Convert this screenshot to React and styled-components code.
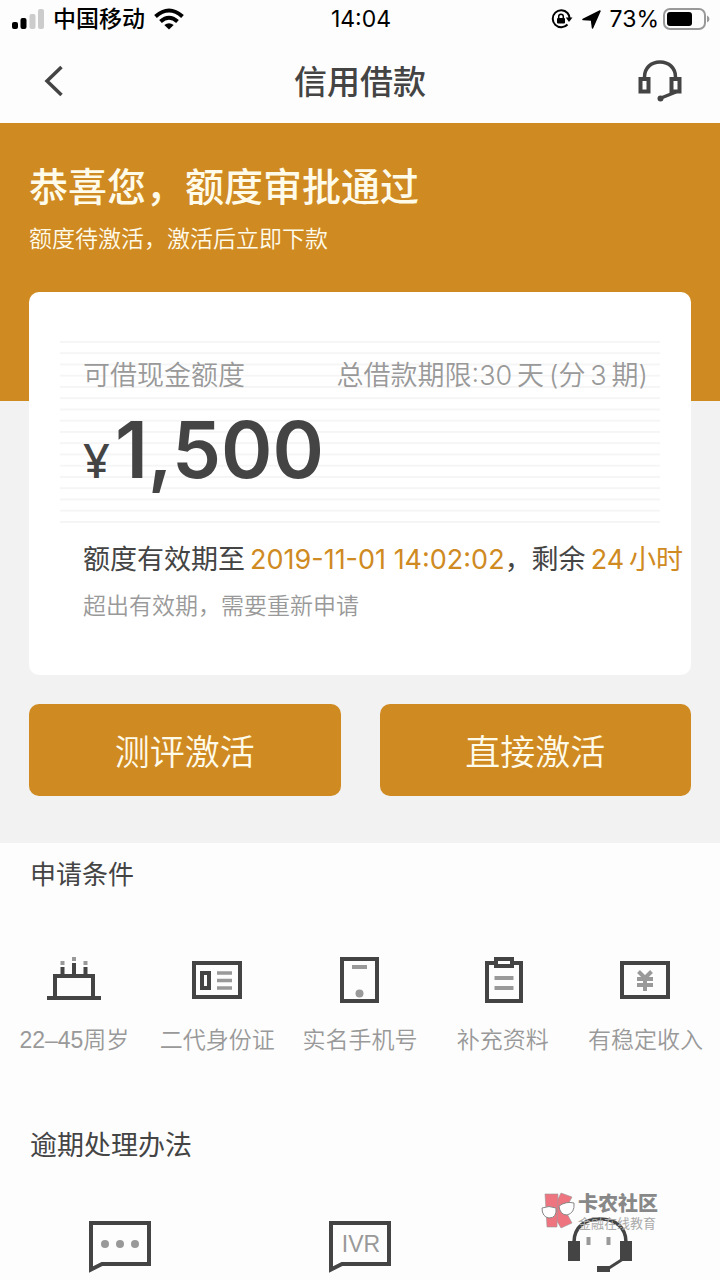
import React from 'react';
import styled, { createGlobalStyle } from 'styled-components';

const GlobalStyle = createGlobalStyle`
  * {
    box-sizing: border-box;
  }

  body {
    margin: 0;
    background-color: #fdfdfd;
    color: #444;
    font-family: Inter, 'Noto Sans CJK SC', sans-serif;
  }

  svg {
    display: block;
    flex: none;
  }
`;

const Page = styled.div`
  position: relative;
  overflow: hidden;
`;

const StatusBar = styled.div`
  display: grid;
  grid-template-columns: 1fr auto 1fr;
  align-items: center;
  height: 38px;
  padding: 0 10px 0 12px;
  color: #000;
  font-size: 23px;
  line-height: 38px;
`;

const StatusGroup = styled.div`
  display: flex;
  align-items: center;
  justify-content: ${(props) => (props.$end ? 'flex-end' : 'flex-start')};
  gap: 9px;
`;

const Carrier = styled.span`
  font-weight: 500;
`;

const BatteryLevel = styled.span`
  display: flex;
  align-items: center;
  gap: 4px;
`;

const NavBar = styled.header`
  display: grid;
  grid-template-columns: 1fr auto 1fr;
  align-items: center;
  height: 85px;
  padding: 0 38px;
`;

const NavTitle = styled.h1`
  margin: 0;
  padding-top: 2px;
  font-size: 33px;
  font-weight: 500;
  line-height: 48px;
`;

const IconButton = styled.button`
  justify-self: ${(props) => (props.$end ? 'end' : 'start')};
  padding: ${(props) => (props.$end ? '0' : '0 6px')};
  border: none;
  background: none;
  color: #444;
  cursor: pointer;
`;

const Hero = styled.section`
  height: 278px;
  padding: 35px 29px;
  background-color: #cf8a22;
  color: #fffbea;
`;

const HeroTitle = styled.h2`
  margin: 0;
  font-size: 39px;
  font-weight: 500;
  line-height: 58px;
`;

const HeroText = styled.p`
  margin: 6px 0 0;
  font-size: 23px;
  font-weight: 350;
  line-height: 34px;
`;

const Main = styled.main`
  display: flow-root;
  padding: 0 29px 47px;
  background-color: #f2f2f2;
`;

const Card = styled.section`
  position: relative;
  margin: -109px 0 29px;
  height: 383px;
  padding: 49px 0 0;
  border-radius: 10px;
  background-color: #fff;
`;

const Quota = styled.div`
  height: 182px;
  margin: 0 31px;
  padding: 17px 12px 0 23px;
  border-bottom: 2px solid #f5f5f5;
  background-image: linear-gradient(#f5f5f5 2px, transparent 2px);
  background-size: 100% 11px;
  background-repeat: repeat round;
`;

const QuotaHead = styled.div`
  display: flex;
  justify-content: space-between;
  color: #999;
  font-size: 27px;
  font-weight: 350;
  line-height: 36px;
  white-space: nowrap;
`;

const Amount = styled.div`
  display: flex;
  align-items: baseline;
  gap: 5px;
  margin-top: 6px;
  font-size: 78px;
  font-weight: 600;
  line-height: 100px;
`;

const Currency = styled.span`
  font-family: 'Noto Sans', sans-serif;
  font-size: 47px;
  font-weight: 500;
`;

const Expiry = styled.p`
  margin: 18px 0 0 54px;
  font-size: 27px;
  line-height: 38px;
  white-space: nowrap;
`;

const Highlight = styled.span`
  margin-left: 5px;
  color: #cf8a22;
`;

const Note = styled.p`
  margin: 9px 0 0 54px;
  color: #999;
  font-size: 23px;
  font-weight: 350;
  line-height: 36px;
`;

const Actions = styled.div`
  display: grid;
  grid-template-columns: 1fr 1fr;
  gap: 39px;
`;

const ActionButton = styled.button`
  height: 92px;
  padding: 0 0 2px;
  border: none;
  border-radius: 10px;
  background-color: #cf8a22;
  color: #fffbea;
  font-family: inherit;
  font-size: 35px;
  font-weight: 350;
  cursor: pointer;
`;

const SectionTitle = styled.h3`
  margin: 0;
  padding: 0 30px;
  font-size: ${(props) => props.$size}px;
  font-weight: 400;
  line-height: 40px;
`;

const Conditions = styled.section`
  padding-top: 12px;
`;

const ConditionList = styled.ul`
  display: grid;
  grid-template-columns: repeat(5, 1fr);
  margin: 61px 0 0;
  padding: 0 3px;
  list-style: none;
`;

const Condition = styled.li`
  display: flex;
  flex-direction: column;
  align-items: center;
  gap: 18px;
  color: #999;
  font-family: 'Liberation Sans', 'Noto Sans CJK SC', sans-serif;
  font-size: 23px;
  font-weight: 350;
  line-height: 36px;
  white-space: nowrap;
`;

const Overdue = styled.section`
  padding-top: 68px;
`;

const MethodList = styled.div`
  display: grid;
  grid-template-columns: repeat(3, 1fr);
  align-items: end;
  justify-items: center;
  padding: 50px 0 7px;
`;

const Watermark = styled.div`
  position: absolute;
  top: 1192px;
  right: 62px;
  display: flex;
  gap: 3px;
  color: #888;
`;

const WatermarkName = styled.div`
  font-size: 20px;
  font-weight: 900;
  line-height: 24px;
`;

const WatermarkSlogan = styled.div`
  color: #aaa;
  font-size: 13px;
  line-height: 14px;
`;

function SignalIcon() {
  return (
    <svg width="32" height="22" viewBox="0 0 32 22">
      <rect x="0" y="14" width="6" height="7" rx="2" />
      <rect x="8.500" y="10" width="6" height="11" rx="2" />
      <rect x="17.500" y="6" width="6" height="15" rx="2" fill="#ccc" />
      <rect x="26" y="1" width="6" height="20" rx="2" fill="#ccc" />
    </svg>
  );
}

function WifiIcon() {
  return (
    <svg width="30" height="22" viewBox="0 0 30 22" fill="none" stroke="#000" strokeWidth="4">
      <path d="M1.500 8.500Q15 -3.500 28.500 8.500" />
      <path d="M6.500 13.500Q15 6 23.500 13.500" />
      <path d="M10.300 17Q15 13.300 19.700 17L15 21.500Z" fill="#000" stroke="none" />
    </svg>
  );
}

function LockIcon() {
  return (
    <svg width="22" height="20" viewBox="0 0 22 20" fill="none" stroke="#000" strokeWidth="2">
      <path d="M16.500 4A8.500 8.500 0 1 0 16.500 15.500M16.500 4Q18.300 6 18.500 9" />
      <path d="M14.800 8.500H21.500L18 13Z" fill="#000" stroke="none" />
      <rect x="6" y="9" width="8" height="5.500" rx="1" fill="#000" stroke="none" />
      <path d="M7.700 9V7.500a2.300 2.300 0 0 1 4.600 0V9" strokeWidth="1.500" />
    </svg>
  );
}

function ArrowIcon() {
  return (
    <svg width="19" height="19" viewBox="0 0 19 19" stroke="#000" strokeLinejoin="round">
      <path d="M18 1L10.500 18L9.500 10L1 9.500Z" strokeWidth="1.500" />
    </svg>
  );
}

function BatteryIcon() {
  return (
    <svg width="47" height="22" viewBox="0 0 47 22">
      <rect x="1" y="1" width="41" height="20" rx="6" fill="none" stroke="#999" strokeWidth="2" />
      <rect x="4" y="4" width="25" height="14" rx="3" />
      <path d="M44 7.500Q46.500 8.500 46.500 11T44 14.500Z" fill="#999" />
    </svg>
  );
}

function BackIcon() {
  return (
    <svg width="20" height="32" viewBox="0 0 20 32" fill="none" stroke="currentColor" strokeWidth="3.500">
      <path d="M17.500 2L3 16L17.500 30" />
    </svg>
  );
}

function HeadsetIcon() {
  return (
    <svg width="44" height="42" viewBox="0 0 44 42" fill="none" stroke="currentColor" strokeWidth="4">
      <path d="M6.500 18V17C6.500 8 13 2 22 2S37.500 8 37.500 17V18" strokeWidth="3.500" />
      <rect x="2.500" y="19" width="8" height="12.500" />
      <rect x="33.500" y="19" width="8" height="12.500" />
      <path d="M38 32L23 38" strokeWidth="3.500" />
      <circle cx="22.500" cy="38.500" r="3" fill="currentColor" stroke="none" />
    </svg>
  );
}

function ConditionIcon({ children }) {
  return (
    <svg width="54" height="48" viewBox="0 0 54 48" fill="none" stroke="#444" strokeWidth="4">
      {children}
    </svg>
  );
}

function BubbleIcon({ children }) {
  return (
    <svg width="62" height="52" viewBox="0 0 62 52">
      <path d="M2 2H60V43H13L2 48.500Z" fill="none" stroke="#444" strokeWidth="4" />
      {children}
    </svg>
  );
}

function AgentIcon() {
  return (
    <svg width="64" height="57" viewBox="0 0 64 57" fill="none" stroke="#444">
      <path d="M6 26C6 11 17 3 32 3S58 11 58 26" strokeWidth="3.500" />
      <rect x="0" y="25" width="12" height="20" fill="#444" stroke="none" />
      <rect x="52" y="25" width="12" height="20" fill="#444" stroke="none" />
      <path d="M20.500 21V29M40.500 21V29" stroke="#999" strokeWidth="4" />
      <path d="M55 43L41 52" strokeWidth="3" />
      <rect x="29" y="50" width="13" height="6" fill="#444" stroke="none" />
    </svg>
  );
}

function WatermarkLogo() {
  return (
    <svg width="34" height="37" viewBox="0 0 34 37">
      <g fill="#ee7480" stroke="#999" strokeWidth="0.600">
        <path d="M13 15L20 1L31 5L24 18L31 31L20 36L13 24Z" />
        <path d="M4 2H17L16 35H6Z" />
      </g>
      <g fill="#fff" stroke="#888" strokeWidth="1">
        <path d="M1 16Q8 13 15 16Q16 26 8 26Q1 25 1 16Z" />
        <path d="M18 14Q25 9 33 11Q34 21 26 23Q19 23 18 14Z" />
      </g>
    </svg>
  );
}

const conditions = [
  {
    label: '22–45周岁',
    icon: (
      <>
        <path d="M8 40V20H46V40M0 42H54M15.500 20V11M27 20V7M38.500 20V11" />
        <path d="M15.500 9V5M27 5V1M38.500 9V5" stroke="#999" />
      </>
    ),
  },
  {
    label: '二代身份证',
    icon: (
      <>
        <rect x="4" y="7" width="46" height="34" />
        <rect x="12" y="17" width="7" height="15" />
        <path d="M27 17H42M27 24.500H42M27 32H42" stroke="#999" strokeWidth="3.500" />
      </>
    ),
  },
  {
    label: '实名手机号',
    icon: (
      <>
        <rect x="9" y="3" width="35" height="42" />
        <path d="M19 11H34" stroke="#999" />
        <circle cx="26.500" cy="37.500" r="4" fill="#999" stroke="none" />
      </>
    ),
  },
  {
    label: '补充资料',
    icon: (
      <>
        <path d="M20 7H11V45H45V7H36" />
        <rect x="20" y="3" width="16" height="7" />
        <path d="M18.500 22H37.500M18.500 32H37.500" stroke="#999" />
      </>
    ),
  },
  {
    label: '有稳定收入',
    icon: (
      <>
        <rect x="3" y="7" width="46" height="34" />
        <g stroke="#999" strokeWidth="4">
          <path d="M19.500 15.500L26 22L32.500 15.500M26 21V35M18 23H34M18 29H34" />
        </g>
      </>
    ),
  },
];

export default function App() {
  return (
    <>
      <GlobalStyle />
      <Page>
        <StatusBar>
          <StatusGroup>
            <SignalIcon />
            <Carrier>中国移动</Carrier>
            <WifiIcon />
          </StatusGroup>
          <span>14:04</span>
          <StatusGroup $end>
            <LockIcon />
            <ArrowIcon />
            <BatteryLevel>
              73%
              <BatteryIcon />
            </BatteryLevel>
          </StatusGroup>
        </StatusBar>

        <NavBar>
          <IconButton aria-label="返回">
            <BackIcon />
          </IconButton>
          <NavTitle>信用借款</NavTitle>
          <IconButton $end aria-label="客服">
            <HeadsetIcon />
          </IconButton>
        </NavBar>

        <Hero>
          <HeroTitle>恭喜您，额度审批通过</HeroTitle>
          <HeroText>额度待激活，激活后立即下款</HeroText>
        </Hero>

        <Main>
          <Card>
            <Quota>
              <QuotaHead>
                <span>可借现金额度</span>
                <span>总借款期限:30&thinsp;天&thinsp;(分&thinsp;3&thinsp;期)</span>
              </QuotaHead>
              <Amount>
                <Currency>¥</Currency>
                <span>1,500</span>
              </Amount>
            </Quota>
            <Expiry>
              额度有效期至<Highlight>2019-11-01 14:02:02</Highlight>，剩余
              <Highlight>24&thinsp;小时</Highlight>
            </Expiry>
            <Note>超出有效期，需要重新申请</Note>
          </Card>
          <Actions>
            <ActionButton>测评激活</ActionButton>
            <ActionButton>直接激活</ActionButton>
          </Actions>
        </Main>

        <Conditions>
          <SectionTitle $size={26}>申请条件</SectionTitle>
          <ConditionList>
            {conditions.map(({ label, icon }) => (
              <Condition key={label}>
                <ConditionIcon>{icon}</ConditionIcon>
                <span>{label}</span>
              </Condition>
            ))}
          </ConditionList>
        </Conditions>

        <Watermark>
          <WatermarkLogo />
          <div>
            <WatermarkName>卡农社区</WatermarkName>
            <WatermarkSlogan>金融在线教育</WatermarkSlogan>
          </div>
        </Watermark>

        <Overdue>
          <SectionTitle $size={27}>逾期处理办法</SectionTitle>
          <MethodList>
            <BubbleIcon>
              <g fill="#999">
                <circle cx="16" cy="23" r="4" />
                <circle cx="31" cy="23" r="4" />
                <circle cx="46" cy="23" r="4" />
              </g>
            </BubbleIcon>
            <BubbleIcon>
              <text x="32" y="31" fill="#999" fontFamily="Liberation Sans" fontSize="23" textAnchor="middle">
                IVR
              </text>
            </BubbleIcon>
            <AgentIcon />
          </MethodList>
        </Overdue>
      </Page>
    </>
  );
}
